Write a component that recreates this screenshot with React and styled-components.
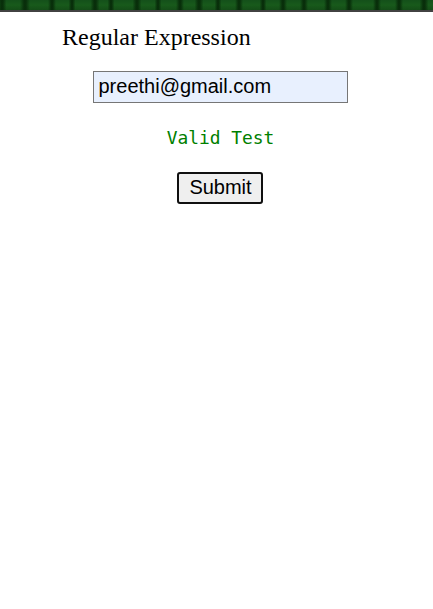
import React from 'react';
import styled, { createGlobalStyle } from 'styled-components';

const GlobalStyle = createGlobalStyle`
  * { box-sizing: border-box; }
  body { margin: 0; background: #fff; overflow: hidden; }
`;

const Page = styled.main`
  width: 433px;
  height: 609px;
  background: #fff;
`;

const Curtain = styled.header`
  height: 12px;
  border-bottom: 2px solid #424242;
  background: #165719;
`;

const Folds = styled.svg`
  display: block;
  width: 433px;
  height: 10px;
`;

const Form = styled.form`
  width: 316px;
  margin-left: 62px;
  display: flex;
  flex-direction: column;
  align-items: center;
`;

const Title = styled.label`
  align-self: flex-start;
  margin-top: 11px;
  font: 24px/29px 'Liberation Serif', serif;
  color: #000;
  white-space: nowrap;
`;

const Field = styled.input`
  width: 255px;
  height: 32px;
  margin-top: 19px;
  padding: 0 5px 1px;
  border: 1px solid #767676;
  border-radius: 0;
  outline: none;
  background: #e8f0fe;
  color: #000;
  font: 20px 'Liberation Sans', sans-serif;
`;

const Message = styled.p`
  margin: 24px 0 0;
  padding-left: 1px;
  color: #008000;
  font: 17.9px/22px 'DejaVu Sans Mono', monospace;
`;

const SubmitButton = styled.button`
  width: 86px;
  height: 32px;
  margin-top: 23px;
  padding: 0 0 2px 1px;
  border: 2px solid #101010;
  border-radius: 3px;
  background: #efefef;
  color: #000;
  font: 20px 'Liberation Sans', sans-serif;
`;

const folds = [
  { x: 2, w: 9 }, { x: 25, w: 10 }, { x: 52, w: 8 }, { x: 72, w: 7 },
  { x: 95, w: 9 }, { x: 111, w: 7 }, { x: 137, w: 9 }, { x: 158, w: 7 },
  { x: 180, w: 8 }, { x: 199, w: 9 }, { x: 218, w: 7 }, { x: 239, w: 8 },
  { x: 263, w: 7 }, { x: 283, w: 8 }, { x: 304, w: 8 }, { x: 328, w: 8 },
  { x: 349, w: 8 }, { x: 377, w: 8 }, { x: 399, w: 8 }, { x: 424, w: 9 },
];

export default function App() {
  return (
    <Page>
      <GlobalStyle />
      <Curtain>
        <Folds viewBox="0 0 433 10" aria-hidden="true">
          <defs>
            <linearGradient id="cloth" x2="0" y2="1">
              <stop offset="0" stopColor="#14501a" />
              <stop offset=".5" stopColor="#185a1b" />
              <stop offset="1" stopColor="#144c17" />
            </linearGradient>
            <linearGradient id="fold">
              <stop offset="0" stopColor="#062808" stopOpacity="0" />
              <stop offset=".4" stopColor="#062808" stopOpacity=".85" />
              <stop offset=".6" stopColor="#062808" stopOpacity=".85" />
              <stop offset="1" stopColor="#062808" stopOpacity="0" />
            </linearGradient>
          </defs>
          <rect width="433" height="10" fill="url(#cloth)" />
          {folds.map(({ x, w }) => (
            <rect key={x} x={x - w / 2} width={w} height="10" fill="url(#fold)" />
          ))}
        </Folds>
      </Curtain>
      <Form onSubmit={(event) => event.preventDefault()}>
        <Title htmlFor="email">Regular Expression</Title>
        <Field id="email" defaultValue="preethi@gmail.com" spellCheck={false} />
        <Message>Valid Test</Message>
        <SubmitButton type="submit">Submit</SubmitButton>
      </Form>
    </Page>
  );
}
